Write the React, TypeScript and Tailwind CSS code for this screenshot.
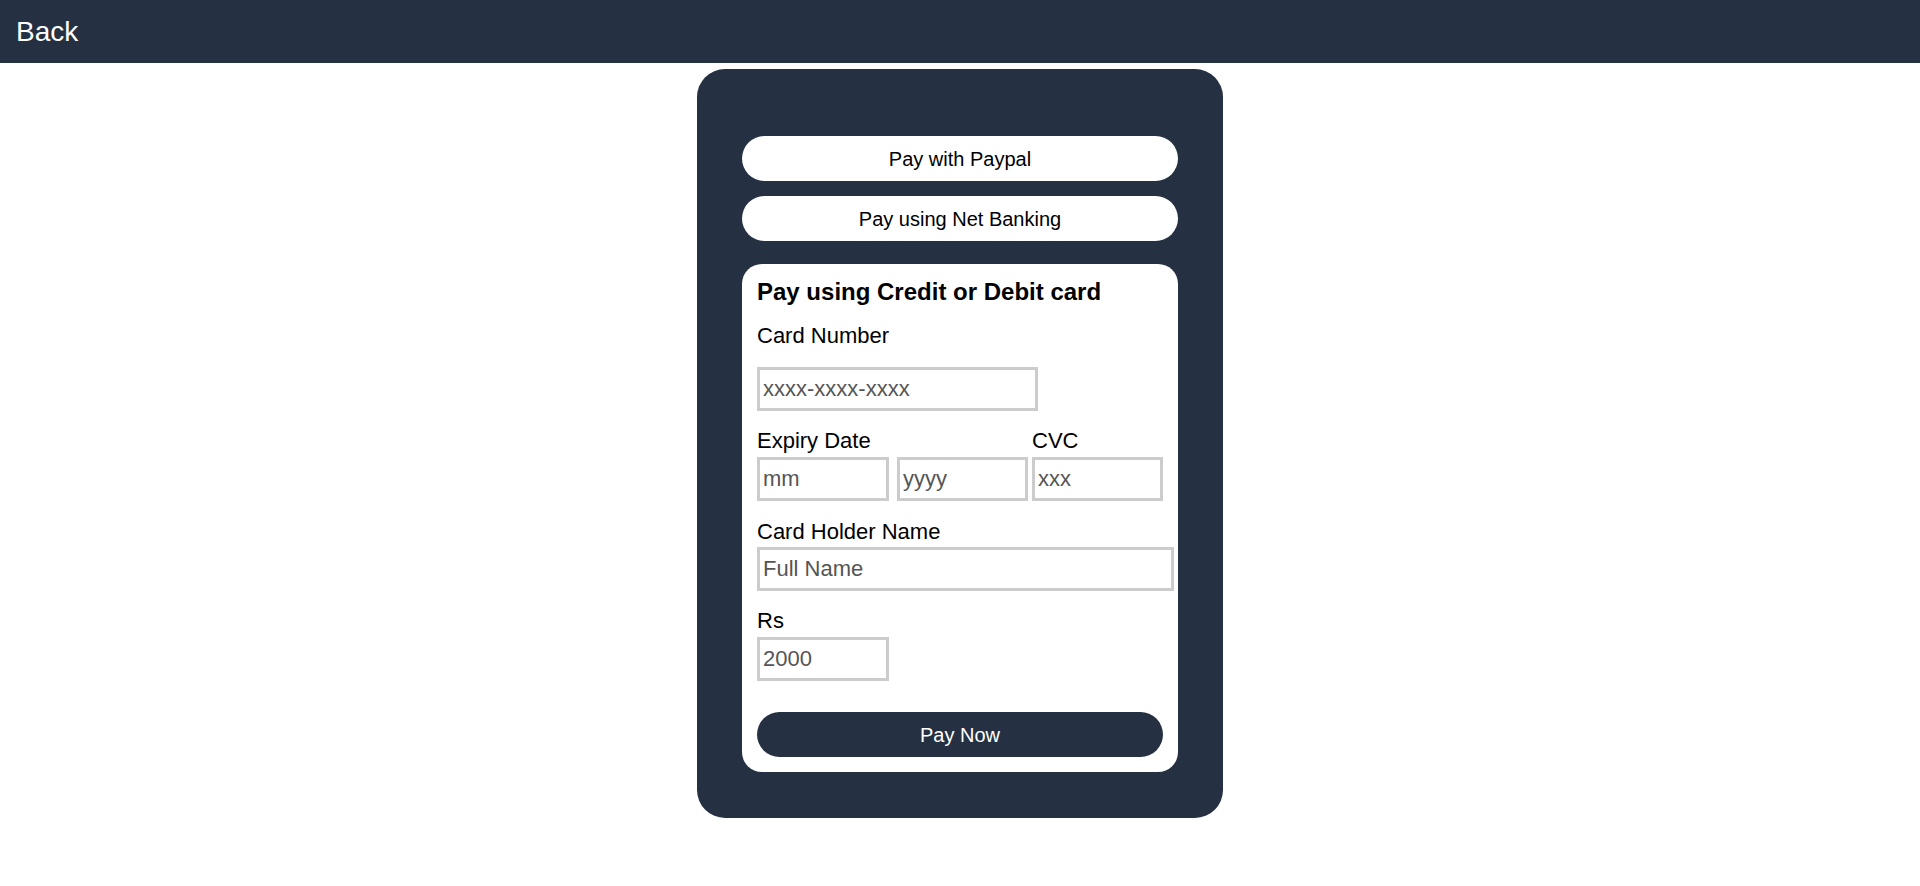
import React, { useState } from "react";

const inputCls =
  "box-border h-[44px] border-[3px] border-solid border-[#cccccc] bg-white px-[3px] text-[22px] text-black placeholder:text-[#555555] outline-none";

const App = () => {
  const [card, setCard] = useState("");
  const [mm, setMm] = useState("");
  const [yyyy, setYyyy] = useState("");
  const [cvc, setCvc] = useState("");
  const [name, setName] = useState("");

  return (
    <div className="min-h-screen bg-white font-['Liberation_Sans',Arial,sans-serif]">
      <div className="flex h-[63px] items-center bg-[#253142] px-4">
        <button className="text-[28px] leading-[32px] text-white">Back</button>
      </div>

      <div className="mx-auto mt-[6px] w-[526px] rounded-[28px] bg-[#253142] px-[45px] pt-[67px] pb-[46px]">
        <button className="block h-[45px] w-full rounded-full bg-white text-[20px] text-black">
          Pay with Paypal
        </button>
        <button className="mt-[15px] block h-[45px] w-full rounded-full bg-white text-[20px] text-black">
          Pay using Net Banking
        </button>

        <div className="mt-[23px] rounded-[20px] bg-white px-[15px] pt-[14px] pb-[15px] text-black">
          <h2 className="text-[24px] font-bold leading-[28px]">Pay using Credit or Debit card</h2>

          <label className="mt-[17px] block text-[22px] leading-[25px]">Card Number</label>
          <input
            className={`${inputCls} mt-[19px] block w-[281px]`}
            placeholder="xxxx-xxxx-xxxx"
            value={card}
            onChange={(e) => setCard(e.target.value)}
          />

          <div className="mt-[17px] flex">
            <div className="flex flex-col">
              <label className="text-[22px] leading-[25px]">Expiry Date</label>
              <div className="mt-[4px] flex gap-[8px]">
                <input
                  className={`${inputCls} w-[132px]`}
                  placeholder="mm"
                  value={mm}
                  onChange={(e) => setMm(e.target.value)}
                />
                <input
                  className={`${inputCls} w-[131px]`}
                  placeholder="yyyy"
                  value={yyyy}
                  onChange={(e) => setYyyy(e.target.value)}
                />
              </div>
            </div>
            <div className="ml-[4px] flex flex-col">
              <label className="text-[22px] leading-[25px]">CVC</label>
              <input
                className={`${inputCls} mt-[4px] w-[131px]`}
                placeholder="xxx"
                value={cvc}
                onChange={(e) => setCvc(e.target.value)}
              />
            </div>
          </div>

          <label className="mt-[18px] block text-[22px] leading-[25px]">Card Holder Name</label>
          <input
            className={`${inputCls} mt-[3px] block w-[417px]`}
            placeholder="Full Name"
            value={name}
            onChange={(e) => setName(e.target.value)}
          />

          <label className="mt-[17px] block text-[22px] leading-[25px]">Rs</label>
          <input className={`${inputCls} mt-[4px] block w-[132px]`} placeholder="2000" readOnly />

          <button className="mt-[31px] block h-[45px] w-full rounded-full bg-[#253142] text-[20px] text-white">
            Pay Now
          </button>
        </div>
      </div>
    </div>
  );
};

export default App;
